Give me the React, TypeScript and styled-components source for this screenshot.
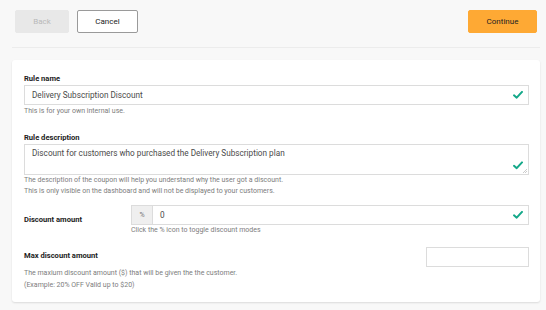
import React from "react";
import styled, { createGlobalStyle } from "styled-components";

const Global = createGlobalStyle`
  html, body { margin: 0; padding: 0; background: #f8f8f8; }
  body { font-family: Roboto, "Liberation Sans", Arial, sans-serif; width: 546px; height: 310px; overflow: hidden; }
  * { box-sizing: border-box; }
`;

const Header = styled.div`
  display: flex;
  align-items: center;
  justify-content: space-between;
  padding: 10px 3px 14px 3px;
  margin: 0 6px 0 12px;
  height: 48px;
  border-bottom: 1px solid #ececec;
`;

const Group = styled.div`
  display: flex;
  gap: 8px;
`;

const Button = styled.button<{ $variant: "disabled" | "outline" | "primary" }>`
  height: 23px;
  padding: 0;
  border-radius: 2px;
  font-family: inherit;
  font-size: 8px;
  cursor: pointer;
  width: ${(p) => (p.$variant === "disabled" ? "54px" : p.$variant === "outline" ? "61px" : "69px")};
  background: ${(p) => (p.$variant === "disabled" ? "#e8e8e8" : p.$variant === "outline" ? "#fff" : "#fea934")};
  color: ${(p) => (p.$variant === "disabled" ? "#b9b9b9" : "#222")};
  border: 1px solid ${(p) => (p.$variant === "outline" ? "#9a9a9a" : p.$variant === "primary" ? "#fea934" : "#e8e8e8")};
`;

const Card = styled.div`
  margin: 12px 6px 0 12px;
  background: #fff;
  border-radius: 3px;
  box-shadow: 0 1px 2px rgba(0, 0, 0, 0.12);
  padding: 11px 11px 11px 12px;
  display: flex;
  flex-direction: column;
`;

const Field = styled.div<{ $mt?: number }>`
  display: flex;
  flex-direction: column;
  margin-top: ${(p) => p.$mt ?? 0}px;
`;

const Label = styled.div`
  font-size: 7.6px;
  font-weight: 700;
  color: #222;
  line-height: 12px;
  padding-top: 2px;
`;

const InputBox = styled.div<{ $h?: number }>`
  position: relative;
  display: flex;
  height: ${(p) => p.$h ?? 20}px;
  flex: none;
  border: 1px solid #dcdcdc;
  background: #fff;
`;

const InputText = styled.div<{ $top?: boolean }>`
  flex: 1;
  display: flex;
  align-items: ${(p) => (p.$top ? "flex-start" : "center")};
  padding: ${(p) => (p.$top ? "3px 7px" : "0 7px")};
  font-size: 8.2px;
  color: #4a4a4a;
`;

const Check = styled.svg<{ $bottom?: boolean }>`
  position: absolute;
  right: 5px;
  top: ${(p) => (p.$bottom ? "auto" : "50%")};
  bottom: ${(p) => (p.$bottom ? "4px" : "auto")};
  transform: ${(p) => (p.$bottom ? "none" : "translateY(-50%)")};
  width: 10px;
  height: 9px;
`;

const Resize = styled.svg`
  position: absolute;
  right: 1px;
  bottom: 1px;
  width: 5px;
  height: 5px;
`;

const Help = styled.div<{ $mt?: number }>`
  font-size: 7px;
  color: #7d7d7d;
  line-height: 11px;
  margin-top: ${(p) => p.$mt ?? 0}px;
`;

const Row = styled.div<{ $mt?: number }>`
  display: grid;
  grid-template-columns: 107px 1fr;
  margin-top: ${(p) => p.$mt ?? 0}px;
`;

const RowLabel = styled(Label)<{ $pt?: number }>`
  padding-top: ${(p) => p.$pt ?? 0}px;
`;

const Addon = styled.div`
  width: 21px;
  background: #efefef;
  border-right: 1px solid #dcdcdc;
  display: flex;
  align-items: center;
  justify-content: center;
  font-size: 7px;
  color: #777;
`;

const MaxRow = styled.div`
  display: flex;
  justify-content: space-between;
  align-items: flex-start;
  margin-top: 12px;
`;

const SmallInput = styled.div`
  width: 103px;
  height: 20px;
  border: 1px solid #dcdcdc;
  margin-top: -1px;
`;

const HelpBlock = styled.div`
  margin-top: 5px;
  font-size: 7px;
  color: #7d7d7d;
  line-height: 12px;
`;

const CheckIcon = ({ bottom }: { bottom?: boolean }) => (
  <Check $bottom={bottom} viewBox="0 0 10 9">
    <path d="M1 4.8 L3.7 7.2 L9 1.4" fill="none" stroke="#14a889" strokeWidth="2" strokeLinecap="round" strokeLinejoin="round" />
  </Check>
);

export default function App() {
  return (
    <>
      <Global />
      <Header>
        <Group>
          <Button $variant="disabled">Back</Button>
          <Button $variant="outline">Cancel</Button>
        </Group>
        <Button $variant="primary">Continue</Button>
      </Header>
      <Card>
        <Field>
          <Label>Rule name</Label>
          <InputBox>
            <InputText>Delivery Subscription Discount</InputText>
            <CheckIcon />
          </InputBox>
          <Help $mt={1}>This is for your own internal use.</Help>
        </Field>
        <Field $mt={13}>
          <Label>Rule description</Label>
          <InputBox $h={31}>
            <InputText $top>Discount for customers who purchased the Delivery Subscription plan</InputText>
            <CheckIcon bottom />
            <Resize viewBox="0 0 5 5">
              <path d="M1 5 L5 1 M3 5 L5 3" stroke="#aaa" strokeWidth="0.6" />
            </Resize>
          </InputBox>
          <Help>The description of the coupon will help you understand why the user got a discount.</Help>
          <Help>This is only visible on the dashboard and will not be displayed to your customers.</Help>
        </Field>
        <Row $mt={8}>
          <RowLabel $pt={9}>Discount amount</RowLabel>
          <Field>
            <InputBox>
              <Addon>%</Addon>
              <InputText>0</InputText>
              <CheckIcon />
            </InputBox>
            <Help>Click the % icon to toggle discount modes</Help>
          </Field>
        </Row>
        <MaxRow>
          <div>
            <Label>Max discount amount</Label>
            <HelpBlock>
              The maxium discount amount ($) that will be given the the customer.
              <br />
              (Example: 20% OFF Valid up to $20)
            </HelpBlock>
          </div>
          <SmallInput />
        </MaxRow>
      </Card>
    </>
  );
}
